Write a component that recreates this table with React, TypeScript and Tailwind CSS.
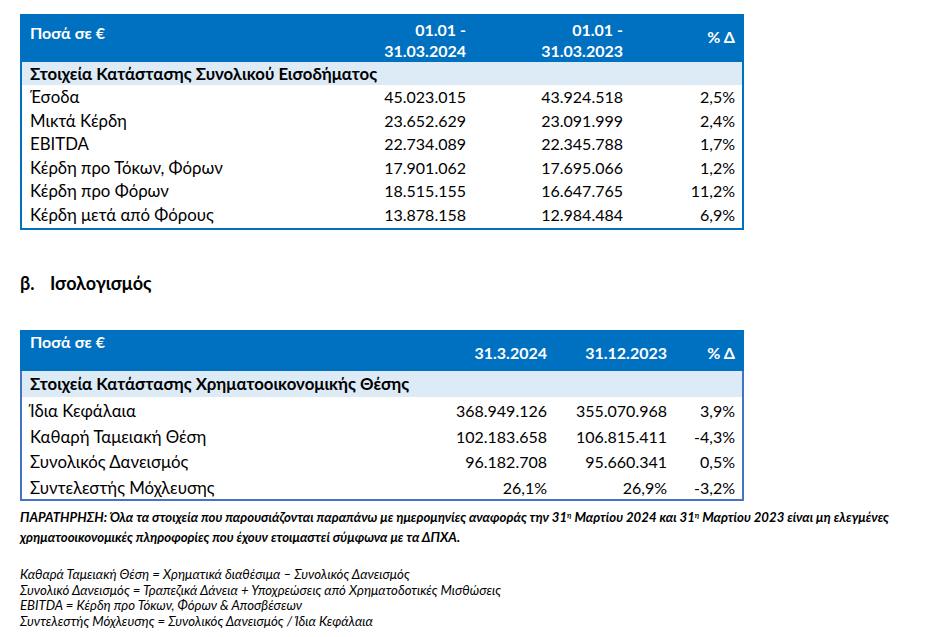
const font = { fontFamily: "Lato, 'Noto Sans', 'Open Sans', sans-serif" }

type Row = [string, string, string, string]

const income: Row[] = [
  ["Έσοδα", "45.023.015", "43.924.518", "2,5%"],
  ["Μικτά Κέρδη", "23.652.629", "23.091.999", "2,4%"],
  ["EBITDA", "22.734.089", "22.345.788", "1,7%"],
  ["Κέρδη προ Τόκων, Φόρων", "17.901.062", "17.695.066", "1,2%"],
  ["Κέρδη προ Φόρων", "18.515.155", "16.647.765", "11,2%"],
  ["Κέρδη μετά από Φόρους", "13.878.158", "12.984.484", "6,9%"],
]

const balance: Row[] = [
  ["Ίδια Κεφάλαια", "368.949.126", "355.070.968", "3,9%"],
  ["Καθαρή Ταμειακή Θέση", "102.183.658", "106.815.411", "-4,3%"],
  ["Συνολικός Δανεισμός", "96.182.708", "95.660.341", "0,5%"],
  ["Συντελεστής Μόχλευσης", "26,1%", "26,9%", "-3,2%"],
]

export default function App() {
  return (
    <div className="w-[928px] h-[637px] bg-white text-black overflow-hidden" style={font}>
      <div className="pt-[14px] pl-[20px] w-[744px]">
        {/* income table */}
        <div className="border-2 border-[#0070C0] pb-[2px]">
          <div className="flex h-[46px] bg-[#0070C0] text-white font-bold text-[16px] leading-[21px]">
            <div className="flex-1 pl-[8px] pt-[6px]">Ποσά σε €</div>
            <div className="w-[157px] text-right pt-[3px]">01.01 -<br />31.03.2024</div>
            <div className="w-[157px] text-right pt-[3px]">01.01 -<br />31.03.2023</div>
            <div className="w-[119px] text-right pr-[7px] pt-[10px]">% Δ</div>
          </div>
          <div className="h-[23px] bg-[#DDEBF7] pl-[8px] font-bold text-[16.8px] leading-[23px]">
            Στοιχεία Κατάστασης Συνολικού Εισοδήματος
          </div>
          {income.map((r) => (
            <div key={r[0]} className="flex h-[23.5px] text-[16px] leading-[23.5px]">
              <div className="flex-1 pl-[8px] text-[16.8px]">{r[0]}</div>
              <div className="w-[157px] text-right">{r[1]}</div>
              <div className="w-[157px] text-right">{r[2]}</div>
              <div className="w-[119px] text-right pr-[7px]">{r[3]}</div>
            </div>
          ))}
        </div>

        <div className="mt-[41px] flex font-bold text-[18px] leading-[24px]">
          <span className="w-[30px]">β.</span>
          <span>Ισολογισμός</span>
        </div>

        {/* balance table */}
        <div className="mt-[35px] border-2 border-t-0 border-[#4472C4]">
          <div className="flex h-[41px] -mx-[2px] bg-[#0070C0] text-white font-bold text-[16px] leading-[21px]">
            <div className="flex-1 pl-[10px] pt-[1px]">Ποσά σε €</div>
            <div className="w-[120px] text-right pt-[12px]">31.3.2024</div>
            <div className="w-[120px] text-right pt-[12px]">31.12.2023</div>
            <div className="w-[77px] text-right pr-[9px] pt-[12px]">% Δ</div>
          </div>
          <div className="h-[26px] bg-[#DDEBF7] pl-[8px] font-bold text-[16.8px] leading-[26px]">
            Στοιχεία Κατάστασης Χρηματοοικονομικής Θέσης
          </div>
          {balance.map((r) => (
            <div key={r[0]} className="flex h-[25.5px] text-[16px] leading-[27px]">
              <div className="flex-1 pl-[8px] text-[16.8px]">{r[0]}</div>
              <div className="w-[120px] text-right">{r[1]}</div>
              <div className="w-[120px] text-right">{r[2]}</div>
              <div className="w-[75px] text-right pr-[7px]">{r[3]}</div>
            </div>
          ))}
        </div>
      </div>

      <div className="pl-[20px] text-[13.2px]">
        <p className="mt-[6px] font-bold italic leading-[20px]">
          ΠΑΡΑΤΗΡΗΣΗ: Όλα τα στοιχεία που παρουσιάζονται παραπάνω με ημερομηνίες αναφοράς την 31<sup className="text-[8px]">η</sup> Μαρτίου 2024 και 31<sup className="text-[8px]">η</sup> Μαρτίου 2023 είναι μη ελεγμένες
        </p>
        <p className="font-bold italic leading-[20px]">
          χρηματοοικονομικές πληροφορίες που έχουν ετοιμαστεί σύμφωνα με τα ΔΠΧΑ.
        </p>
        <div className="mt-[20px] italic leading-[15.5px]">
          <p>Καθαρά Ταμειακή Θέση = Χρηματικά διαθέσιμα – Συνολικός Δανεισμός</p>
          <p>Συνολικό Δανεισμός = Τραπεζικά Δάνεια + Υποχρεώσεις από Χρηματοδοτικές Μισθώσεις</p>
          <p>EBITDA = Κέρδη προ Τόκων, Φόρων &amp; Αποσβέσεων</p>
          <p>Συντελεστής Μόχλευσης = Συνολικός Δανεισμός / Ίδια Κεφάλαια</p>
        </div>
      </div>
    </div>
  )
}
